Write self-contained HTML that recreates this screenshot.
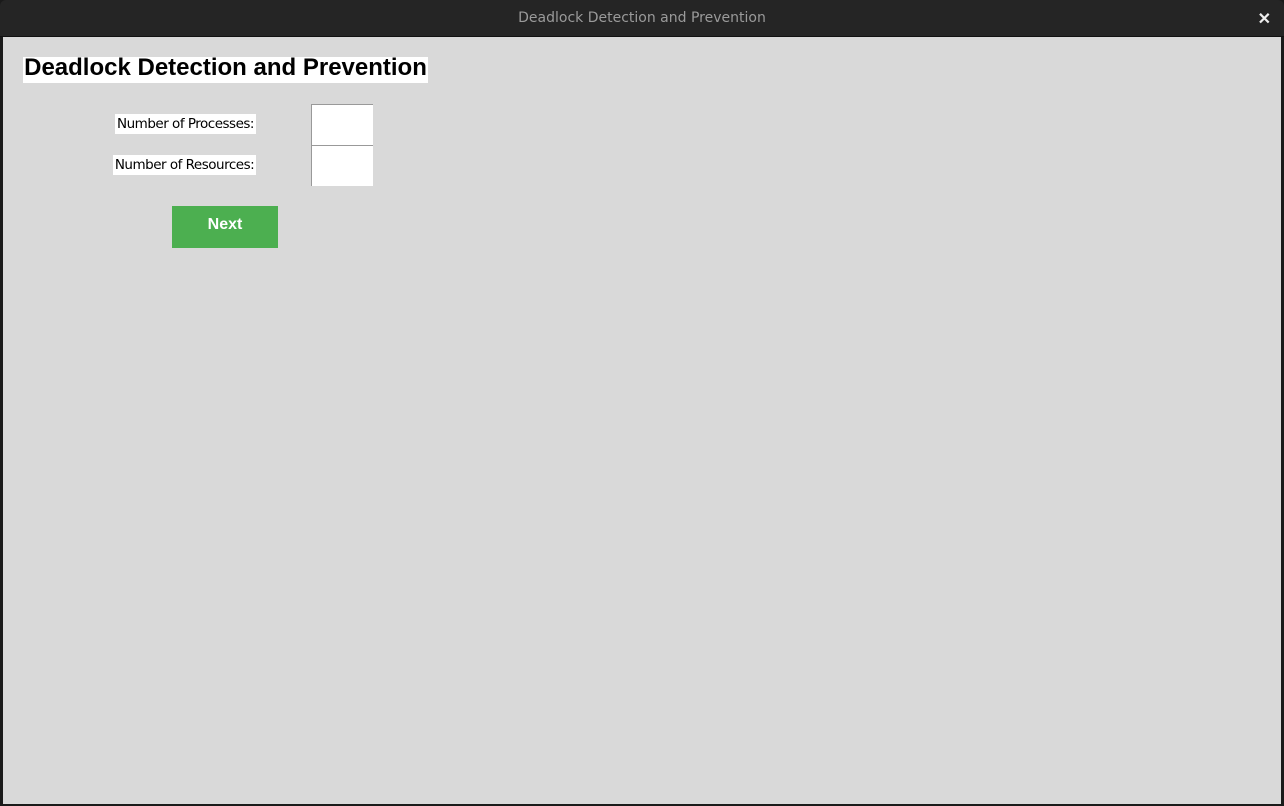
<!DOCTYPE html>
<html><head><style>
body{margin:0;width:1284px;height:806px;background:#1a1a1a;position:relative;overflow:hidden;font-family:"Liberation Sans",sans-serif}
.tb{position:absolute;left:0;top:0;width:1284px;height:36px;background:#252525;border-radius:6px 6px 0 0;border-bottom:1px solid #111}
.tt{position:absolute;top:10px;width:100%;text-align:center;color:#9a9a9a;font-family:"DejaVu Sans",sans-serif;font-size:14px;font-weight:normal}
.x{position:absolute;right:13px;top:9px;color:#eee;font-size:16px;font-weight:bold}
.c{position:absolute;left:3px;top:37px;width:1278px;height:767px;background:#d9d9d9}
.a{position:absolute;background:#fff}
.h{left:23px;top:57px;width:405px;height:26px;font-size:24px;font-weight:bold;line-height:22px;text-align:center;white-space:nowrap}
.l{font-family:"DejaVu Sans",sans-serif;font-size:13.5px;line-height:20px;height:20px;text-align:center;color:#000;white-space:nowrap;letter-spacing:-0.5px}
.e{left:311px;width:61px;height:40px;border-left:1px solid #999;border-top:1px solid #999}
.b{position:absolute;left:172px;top:206px;width:106px;height:42px;background:#4caf50;color:#fff;font-weight:bold;font-size:16px;text-align:center;line-height:38px}
</style></head><body>
<div class="tb"><div class="tt">Deadlock Detection and Prevention</div><div class="x">✕</div></div>
<div class="c"></div>
<div class="a h">Deadlock Detection and Prevention</div>
<div class="a l" style="left:115px;top:114px;width:141px">Number of Processes:</div>
<div class="a l" style="left:113px;top:155px;width:143px">Number of Resources:</div>
<div class="a e" style="top:104px"></div>
<div class="a e" style="top:145px"></div>
<div class="b">Next</div>
</body></html>
